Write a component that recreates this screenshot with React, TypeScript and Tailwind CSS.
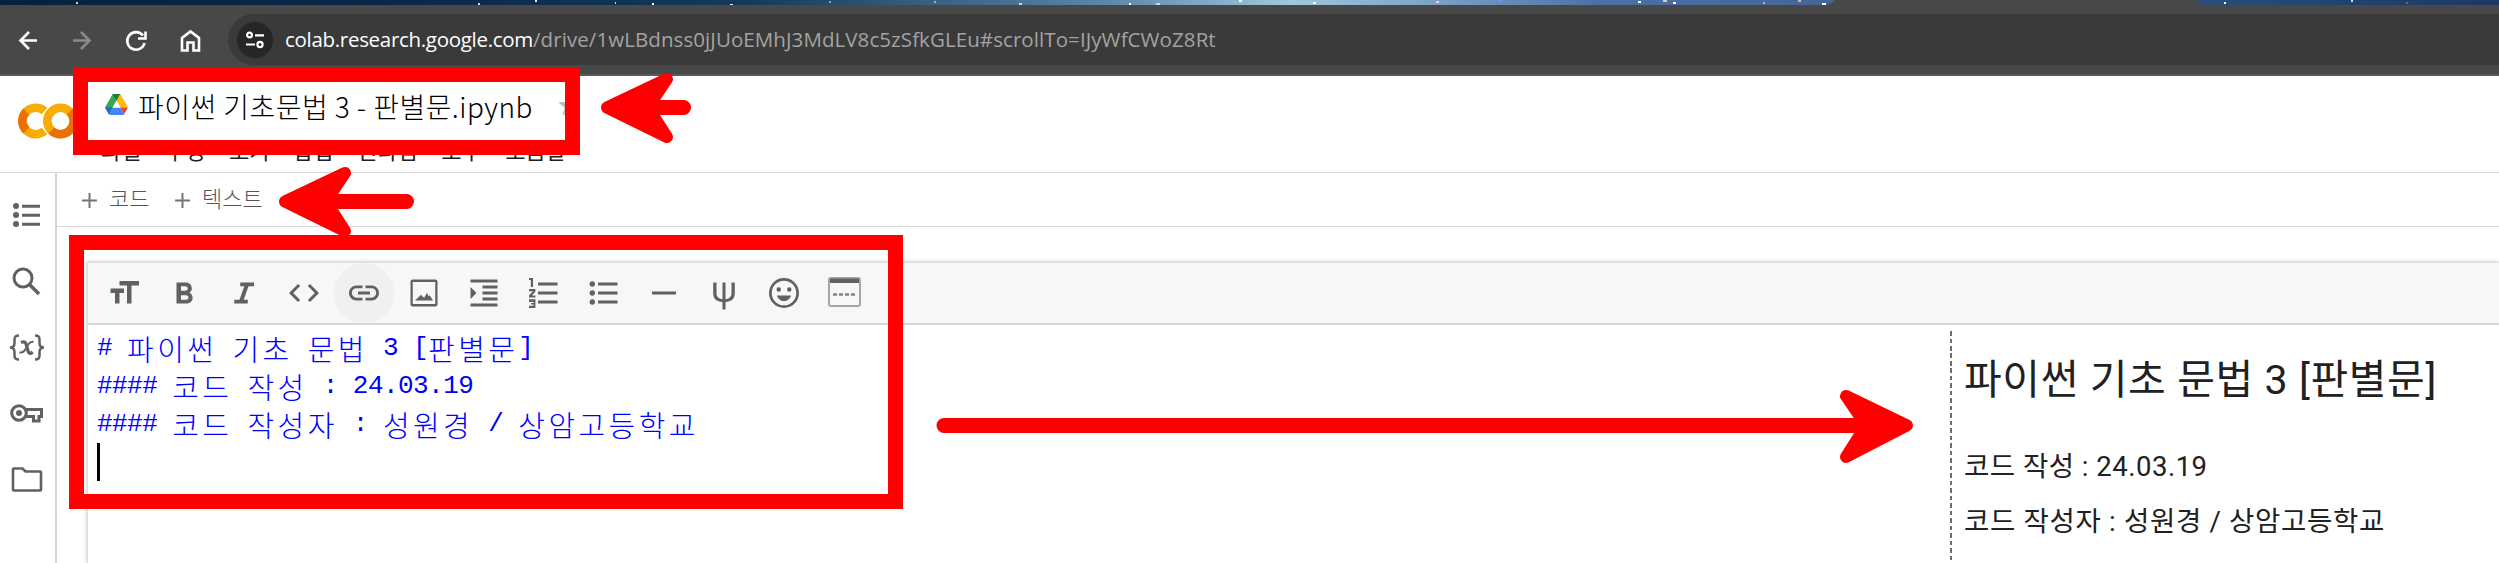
import React from "react";

const TOOLBAR_PATHS: { name: string; d: string; active?: boolean }[] = [
  { name: "heading", d: "M9 4v3h5v12h3V7h5V4H9zm-6 8h3v7h3v-7h3V9H3v3z" },
  {
    name: "bold",
    d: "M15.6 11.79c.97-.67 1.65-1.77 1.65-2.79 0-2.26-1.75-4-4-4H7v14h7.04c2.09 0 3.71-1.7 3.71-3.79 0-1.52-.86-2.82-2.15-3.42zM10 7.5h3c.83 0 1.5.67 1.5 1.5s-.67 1.5-1.5 1.5h-3v-3zm3.5 9H10v-3h3.5c.83 0 1.5.67 1.5 1.5s-.67 1.5-1.5 1.5z",
  },
  { name: "italic", d: "M9.500 5v2.500h2.700l-3.200 9H5.500V19h9v-2.500h-2.700l3.200-9h3.700V5z" },
  {
    name: "code",
    d: "M9.4 16.6L4.8 12l4.6-4.6L8 6l-6 6 6 6 1.4-1.4zm5.2 0l4.6-4.6-4.6-4.6L16 6l6 6-6 6-1.4-1.4z",
  },
  {
    name: "link",
    active: true,
    d: "M3.9 12c0-1.71 1.39-3.1 3.1-3.1h4V7H7c-2.76 0-5 2.24-5 5s2.24 5 5 5h4v-1.9H7c-1.71 0-3.1-1.39-3.1-3.1zM8 13h8v-2H8v2zm9-6h-4v1.9h4c1.71 0 3.1 1.39 3.1 3.1s-1.39 3.1-3.1 3.1h-4V17h4c2.76 0 5-2.24 5-5s-2.24-5-5-5z",
  },
  {
    name: "image",
    d: "M19.5 4.7v14.6h-15V4.7h15m0-1.7h-15C3.6 3 3 3.6 3 4.5v15c0 .9.6 1.5 1.5 1.5h15c.9 0 1.5-.6 1.5-1.5v-15c0-.9-.6-1.5-1.5-1.5zM14.100 11.900l-2 3.200-1.200-.9-.9-1L6 17h12l-2.200-3.500-.8.6z",
  },
  {
    name: "indent",
    d: "M3 21h18v-2H3v2zM3 8v8l4-4-4-4zm8 9h10v-2H11v2zM3 3v2h18V3H3zm8 6h10V7H11v2zm0 4h10v-2H11v2z",
  },
  {
    name: "numbered",
    d: "M2 18h3v.7H3.3v1H5v.8H2V22h4.3v-5.8H2zM3.2 8h1.5V2H2v1.4h1.2zM2 10.8h2.6L2 13.6V15h4.3v-1.4H4L6.3 11V9.3H2zM8 5v2h13V5H8zm0 14h13v-2H8v2zm0-6h13v-2H8v2z",
  },
  {
    name: "bulleted",
    d: "M4.2 4.2a1.8 1.8 0 1 0 0 3.6 1.8 1.8 0 0 0 0-3.6zm0 6a1.8 1.8 0 1 0 0 3.6 1.8 1.8 0 0 0 0-3.6zm0 6a1.8 1.8 0 1 0 0 3.6 1.8 1.8 0 0 0 0-3.6zM8 5v2h13V5zm0 6v2h13v-2zm0 6v2h13v-2z",
  },
  { name: "rule", d: "M4 11h16v2H4z" },
  {
    name: "psi",
    d: "M4.8 5H7v7.2c0 2.2 1.4 3.7 4 3.9V5h2v11.1c2.6-.2 4-1.7 4-3.9V5h2.2v7.3c0 3.5-2.3 5.5-6.2 5.7V23h-2v-5c-3.9-.2-6.2-2.2-6.2-5.7z",
  },
  {
    name: "emoji",
    d: "M12 2a10 10 0 1 0 0 20 10 10 0 0 0 0-20zm0 18.2a8.2 8.2 0 1 1 0-16.4 8.2 8.2 0 0 1 0 16.4zM8.5 8.2a1.5 1.5 0 1 0 0 3 1.5 1.5 0 0 0 0-3zm7 0a1.5 1.5 0 1 0 0 3 1.5 1.5 0 0 0 0-3zM7.3 13.6c.6 2.2 2.500 3.800 4.700 3.800s4.100-1.600 4.700-3.800z",
  },
];

/* Small bright specks of the wallpaper above the toolbar: x, y, width, colour. */
const SPECKS: [number, number, number, string][] = [
  [76, 2, 2, "#d9c9c9"],
  [478, 3, 2, "#cfd8e0"],
  [535, 0, 2, "#f0f0f0"],
  [615, 2, 1, "#c9d6e4"],
  [652, 3, 2, "#ffffff"],
  [730, 4, 3, "#e8e8e8"],
  [829, 1, 2, "#b59a9a"],
  [934, 1, 2, "#c9a58a"],
  [1019, 3, 3, "#e0c9c9"],
  [1129, 3, 2, "#ffffff"],
  [1156, 3, 4, "#e6c8ee"],
  [1239, 0, 3, "#ffffff"],
  [1313, 2, 3, "#ffffff"],
  [1436, 1, 3, "#e9c8ff"],
  [1498, 0, 3, "#8f7cff"],
  [1638, 1, 3, "#ffffff"],
  [1663, 0, 4, "#d9c9b5"],
  [1673, 2, 3, "#ffffff"],
  [1763, 2, 2, "#c0a5c9"],
  [1798, 0, 3, "#c9b5b5"],
  [1822, 3, 4, "#ffffff"],
  [2224, 2, 2, "#ffffff"],
  [2351, 0, 2, "#d9d9d9"],
  [2406, 2, 2, "#a05a5a"],
];

function BrowserBar() {
  return (
    <header className="flex h-[76px] flex-col bg-[#484848]">
      <div className="relative flex h-[5px] w-full">
        <div className="w-[1834px] bg-[linear-gradient(90deg,#06213d_0px,#0b2846_420px,#143a5c_750px,#5885a8_1100px,#a2c6dc_1290px,#7fa6c8_1420px,#4d70a5_1600px,#456596_1834px)]" />
        <div className="w-[364px] bg-[#484848]" />
        <div className="flex-1 bg-[linear-gradient(90deg,#2a4d7c,#1b3962)]" />
        <svg className="absolute inset-0 h-[5px] w-[2499px]" viewBox="0 0 2499 5">
          <path fill="#484848" d="M1826 5q6-1 9-5v5zM2193 0q3 4 9 5h-9z" />
          {SPECKS.map(([x, y, w, fill]) => (
            <rect key={x} x={x} y={y} width={w} height={2} fill={fill} />
          ))}
        </svg>
      </div>
      <div className="flex h-[69px] items-center">
        <svg className="h-9 w-[228px] shrink-0" viewBox="0 0 228 36" fill="none" strokeWidth="2.6">
          <g stroke="#fff">
            <path d="M37 18.5H21M29 10l-8.5 8.5L29 27" />
            <path d="M143 13.5a8.8 8.8 0 1 0 1.6 7.5M145.5 9.5v7h-7.5" />
            <path d="M182 28.5V16l8.5-6.5L199 16v12.5h-5.5v-8h-6v8z" />
          </g>
          <path stroke="#8b8b8b" d="M73 18.5h16M81 10l8.5 8.5L81 27" />
        </svg>
        <div className="flex h-[51px] flex-1 items-center rounded-l-full bg-[#3a3a3a] pl-[9px]">
          <div className="flex size-9 shrink-0 items-center justify-center rounded-full bg-[#262626]">
            <svg className="h-[18px] w-5" viewBox="0 0 20 18" fill="none" stroke="#fff" strokeWidth="2.2">
              <circle cx="4.5" cy="4" r="2.4" />
              <path d="M10 4.3h9M1 13.5h9" />
              <circle cx="15" cy="13.5" r="2.6" />
            </svg>
          </div>
          <div className="ml-3 whitespace-nowrap pb-[2px] font-['Open_Sans',sans-serif] text-[20.5px] leading-[26px] text-[#a3a3a3]">
            <span className="tracking-[-0.3px] text-white">colab.research.google.com</span>
            <span className="tracking-[0.08px]">/drive/1wLBdnss0jJUoEMhJ3MdLV8c5zSfkGLEu#scrollTo=IJyWfCWoZ8Rt</span>
          </div>
        </div>
      </div>
      <div className="h-[2px] bg-[#5a5a5a]" />
    </header>
  );
}

function NotebookHeader() {
  return (
    <div className="flex h-[97px] border-b border-[#d8d8d8]">
      <svg className="mt-[26px] ml-[17px] h-[38px] w-[70px] shrink-0" viewBox="0 0 70 38" fill="none" strokeWidth="8.5">
        <path stroke="#f9ab00" d="M27.5 9.2A13.2 13.2 0 1 0 27.5 28.8" />
        <path stroke="#e8710a" d="M9.3 9.6A13.2 13.2 0 0 0 9.3 28.4" />
        <circle cx="43.5" cy="19" r="13.2" stroke="#fff" strokeWidth="11" />
        <circle cx="43.5" cy="19" r="13.2" stroke="#f9ab00" />
        <path stroke="#e8710a" d="M52.8 9.6A13.2 13.2 0 0 1 34.2 28.4" />
      </svg>
      <div className="flex flex-col pl-[17px]">
        <div className="flex h-[56px] items-center">
          <svg className="mt-[1px] ml-[1px] h-[21px] w-[23px]" viewBox="0 0 23 21">
            <path fill="#34a853" d="M7.7 0h7.6L4 20 0 13.5z" />
            <path fill="#188038" d="M7.7 0h7.6l-3.8 6.7z" />
            <path fill="#fbbc04" d="M15.3 0L23 13.5h-7.6L11.5 6.7z" />
            <path fill="#4285f4" d="M7.7 13.5h7.7L19 20.5q-.5.5-1.5.5H5.500Q4.500 21 4 20.500z" />
            <path fill="#1967d2" d="M0 13.5h7.7L4 20.5z" />
            <path fill="#ea4335" d="M15.4 13.5H23l-4 7z" />
            <path fill="#fff" d="M11.5 6.7l3.900 6.800H7.700z" />
          </svg>
          <div className="mt-[3px] ml-[10px] whitespace-nowrap font-['Noto_Sans_CJK_KR',sans-serif] text-[28px] leading-[40px] font-light tracking-[0.45px] text-black">
            파이썬 기초문법 3 - 판별문.ipynb
          </div>
          <svg className="mt-[3px] ml-[23px] h-[27px] w-[27px]" viewBox="0 0 24 24" fill="#bdbdbd">
            <path d="M12 17.300L18.200 21l-1.600-7L22 9.200l-7.200-.6L12 2 9.200 8.600 2 9.200 7.500 14l-1.700 7z" />
          </svg>
        </div>
        <div className="ml-[-3px] flex h-[34px] items-center gap-[23.5px] whitespace-nowrap font-['Noto_Sans_CJK_KR',sans-serif] text-[22px] leading-[34px] text-[#202124]">
          {["파일", "수정", "보기", "삽입", "런타임", "도구", "도움말"].map((item) => (
            <span key={item}>{item}</span>
          ))}
        </div>
      </div>
    </div>
  );
}

function Sidebar() {
  return (
    <nav className="w-[57px] shrink-0 border-r-2 border-[#d5d5d5]">
      <svg className="h-[390px] w-[55px]" viewBox="0 173 55 390" fill="none" stroke="#616161" strokeWidth="3">
        <g fill="#616161" stroke="none">
          <circle cx="16" cy="206" r="3" />
          <circle cx="16" cy="215" r="3" />
          <circle cx="16" cy="224" r="3" />
          <path d="M22 204.700h18v3H22zM22 213.700h18v3H22zM22 222.700h18v3H22z" />
        </g>
        <circle cx="23" cy="278" r="9" />
        <path d="M29.5 284.5L39 294" strokeWidth="3.6" />
        <path d="M19 335.500c-4 0-4.500 1.500-4.500 4v3.500c0 3-1 4.500-4.500 4.500 3.500 0 4.500 1.500 4.500 4.500v3.500c0 2.500.5 4 4.500 4M35 335.500c4 0 4.500 1.500 4.500 4v3.500c0 3 1 4.500 4.500 4.500-3.500 0-4.500 1.500-4.500 4.500v3.500c0 2.500-.5 4-4.500 4" strokeWidth="2.5" />
        <path d="M21 342.500c3-1.500 4.500-.5 5.200 2l2 7c.7 2.300 2.300 2.600 4.500.5" strokeWidth="3.200" />
        <path d="M33.500 342c-3.500-1-5.500 2.500-7 5.500s-3.500 6-7 4.800" strokeWidth="2" />
        <circle cx="19" cy="413" r="7.300" />
        <circle cx="19" cy="413" r="3" fill="#616161" stroke="none" />
        <path d="M25 409.500h16.500v7H39v4.500h-5.500v-4.500H25" />
        <path d="M14 468.500h8.500l3 3H40q1 0 1 1v17q0 1-1 1H14q-1 0-1-1v-20q0-1 1-1z" strokeWidth="2.6" />
      </svg>
    </nav>
  );
}

function AddButton({ label, className }: { label: string; className: string }) {
  return (
    <div className={"flex items-center " + className}>
      <svg className="mt-[2px] size-[15px]" viewBox="0 0 15 15" stroke="#757575" strokeWidth="2">
        <path d="M7.500 0v15M0 7.500h15" />
      </svg>
      <span className="mb-[4px] ml-[12px] whitespace-nowrap font-['Noto_Sans_CJK_KR',sans-serif] text-[22px] leading-[30px] font-light text-[#555555]">
        {label}
      </span>
    </div>
  );
}

function FormatToolbar() {
  return (
    <div className="flex h-[62px] shrink-0 border-b-2 border-[#d6d6d6] bg-[#f7f7f7] pl-[6px]">
      {TOOLBAR_PATHS.map((icon) => (
        <div
          key={icon.name}
          className={
            icon.active
              ? "flex size-[60px] items-center justify-center rounded-full bg-[#f0f0f0]"
              : "flex size-[60px] items-center justify-center"
          }
        >
          <svg className="size-9" viewBox="0 0 24 24" fill="#616161">
            <path d={icon.d} />
          </svg>
        </div>
      ))}
      <div className="flex size-[60px] items-center justify-center">
        <svg className="mb-[3px] h-[30px] w-[33px]" viewBox="0 0 33 30" fill="none">
          <rect x="1" y="1" width="31" height="28" rx="2" stroke="#a5a5a5" strokeWidth="2" />
          <path fill="#616161" d="M2 1.500h29V6H2z" />
          <path stroke="#858585" strokeWidth="2.600" strokeDasharray="4 2" d="M5 17.500h23" />
        </svg>
      </div>
    </div>
  );
}

function CodeLine({ text }: { text: string }) {
  const runs = text.match(/[가-힣]+|[^가-힣]+/g) ?? [];
  return (
    <div className="flex h-[38px] items-center whitespace-pre text-[#0000ff]">
      {runs.map((run, i) =>
        /[가-힣]/.test(run) ? (
          <span key={i} className="font-['Noto_Sans_CJK_KR',sans-serif] text-[29px] leading-[38px] font-light tracking-[3.4px]">
            {run}
          </span>
        ) : (
          <span key={i} className="font-['Liberation_Mono',monospace] text-[26px] leading-[38px] tracking-[-0.55px]">
            {run}
          </span>
        ),
      )}
    </div>
  );
}

function Editor() {
  return (
    <div className="flex min-h-0 flex-1">
      <div className="w-[1862px] pt-[4px] pl-[9px]">
        <CodeLine text="# 파이썬 기초 문법 3 [판별문]" />
        <CodeLine text="#### 코드 작성 : 24.03.19" />
        <CodeLine text="#### 코드 작성자 : 성원경 / 상암고등학교" />
        <div className="h-[38px] w-[3px] bg-black" />
      </div>
      <div className="mt-[6px] w-[2px] bg-[repeating-linear-gradient(180deg,#707070_0px,#707070_4.5px,transparent_4.5px,transparent_7.5px)]" />
      <div className="flex-1 whitespace-nowrap pl-[12px] font-['Roboto','Noto_Sans_CJK_KR',sans-serif] text-[#212121]">
        <h1 className="mt-[27px] text-[41px] leading-[56px] font-normal tracking-[0.6px]">파이썬 기초 문법 3 [판별문]</h1>
        <p className="mt-[39px] text-[27.500px] leading-[40px] font-normal tracking-[0.5px]">코드 작성 : 24.03.19</p>
        <p className="mt-[15px] text-[27.500px] leading-[40px] font-normal tracking-[0.7px]">코드 작성자 : 성원경 / 상암고등학교</p>
      </div>
    </div>
  );
}

function Annotations() {
  return (
    <svg className="pointer-events-none absolute inset-0 h-[563px] w-[2499px]" viewBox="0 0 2499 563" fill="none" stroke="#ff0000" strokeWidth="15">
      <rect x="80.5" y="74.5" width="492" height="73" />
      <rect x="76.5" y="242.5" width="819" height="259" />
      <g strokeLinecap="round">
        <path d="M683.5 107.5H630" />
        <path d="M406.5 201.5H310" />
        <path d="M944 425.5H1880" />
      </g>
      <g fill="#ff0000" strokeWidth="12" strokeLinejoin="round">
        <path d="M607 107.5L667 79L648 107.5L667 137Z" />
        <path d="M285 201.5L345 173L326 201.5L345 231Z" />
        <path d="M1907 425.5L1846 396L1866 425.5L1846 457Z" />
      </g>
    </svg>
  );
}

export default function App() {
  return (
    <div className="relative flex h-[563px] w-[2499px] flex-col overflow-hidden bg-white">
      <BrowserBar />
      <NotebookHeader />
      <div className="flex min-h-0 flex-1">
        <Sidebar />
        <main className="flex min-w-0 flex-1 flex-col">
          <div className="flex h-[54px] shrink-0 items-center border-b border-[#d8d8d8] pb-[1px] pl-[25px]">
            <AddButton label="코드" className="w-[93px]" />
            <AddButton label="텍스트" className="w-[100px]" />
          </div>
          <section className="mt-[35px] ml-[30px] flex min-h-0 flex-1 flex-col border-t border-l border-[#dedede] shadow-[0_0_4px_rgba(0,0,0,0.25)]">
            <FormatToolbar />
            <Editor />
          </section>
        </main>
      </div>
      <Annotations />
    </div>
  );
}
